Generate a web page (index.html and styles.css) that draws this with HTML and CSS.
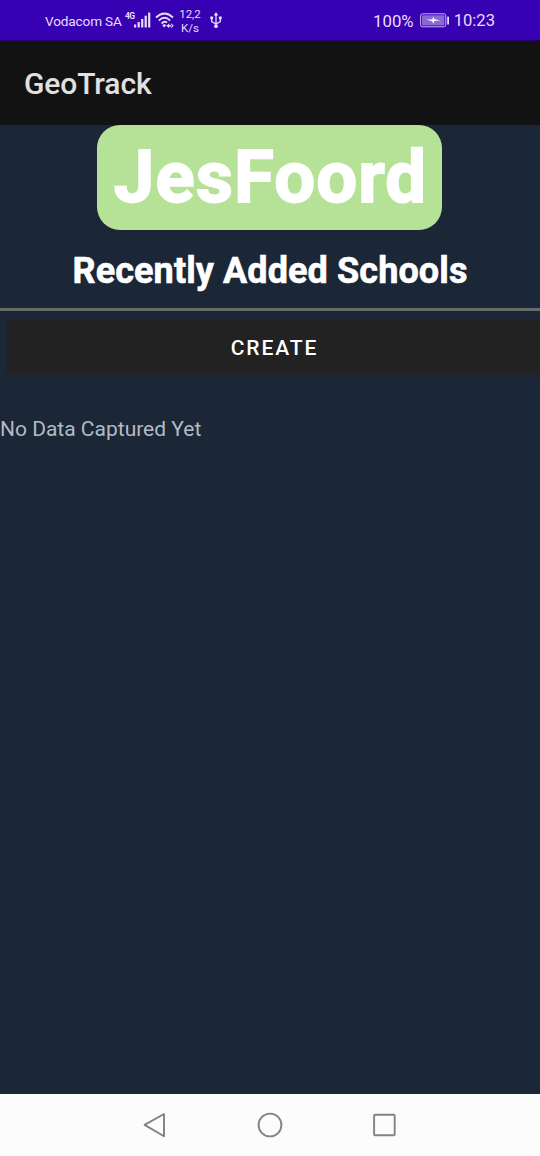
FILE: index.html
```html
<!DOCTYPE html>
<html lang="en">
<head>
<meta charset="utf-8">
<title>GeoTrack</title>
<link rel="stylesheet" href="styles.css">
</head>
<body>
<div class="screen">
  <div class="status">
    <span class="carrier">Vodacom SA</span>
    <span class="network">4G</span>
    <svg class="signal" width="17" height="16" viewBox="0 0 17 16" fill="#e9dcfb"><rect x="0" y="12.5" width="2.2" height="3"/><rect x="3.6" y="10" width="2.2" height="5.5"/><rect x="7.1" y="7" width="2.2" height="8.5"/><rect x="10.6" y="3.7" width="2.2" height="11.8"/><rect x="14.1" y="0.5" width="2.2" height="15"/></svg>
    <svg class="wifi" width="20" height="17" viewBox="0 0 20 17" fill="none" stroke="#e9dcfb" stroke-width="1.8"><path d="M1 5.5Q9.5-2.5 18 5.5M3.8 8.6Q9.5 3 15.2 8.6M6.6 11.5Q9.5 8.5 12 10.5"/><path d="M7.2 13.2Q9.3 11.2 11.2 13.2L9.3 15.6Z" fill="#e9dcfb" stroke="none"/><path d="M11.4 13.8l2.8-2.5v5zM18.8 13.8l-2.8-2.5v5zM13 13.1h4v1.4h-4z" fill="#e9dcfb" stroke="none"/></svg>
    <span class="speed"><span>12,2</span><span>K/s</span></span>
    <svg class="usb" width="12" height="17" viewBox="0 0 12 17" fill="none" stroke="#e9dcfb" stroke-width="1.3"><path d="M6 2v12M1.7 6v3.6L6 12l4.3-2.4V6"/><path d="M6 0l2.3 3.6H3.7zM.3 4.5h2.8v2.8H.3zM8.9 4.5h2.8v2.8H8.9z" fill="#e9dcfb" stroke="none"/><circle cx="6" cy="14.2" r="1.9" fill="#e9dcfb" stroke="none"/></svg>
    <span class="percent">100%</span>
    <svg class="battery" width="30" height="15" viewBox="0 0 30 15"><rect x=".6" y=".8" width="25.2" height="13" rx="2" fill="none" stroke="#cbb5f2" stroke-width="1"/><rect x="2" y="2.2" width="22.4" height="10.2" rx=".7" fill="#8a68d4"/><path d="M6.5 6.5l6-.1.4-2.6 1.8 2.4 5.6 1-6 .9-.5 2.5-1.9-2.4z" fill="#fff"/><rect x="27.2" y="3.5" width="1.8" height="8" rx=".6" fill="#e9dcfb"/></svg>
    <span class="clock">10:23</span>
  </div>
  <header class="appbar">GeoTrack</header>
  <main class="content">
    <div class="brand">JesFoord</div>
    <h1 class="heading">Recently Added Schools</h1>
    <div class="divider"></div>
    <button class="create">CREATE</button>
    <p class="empty">No Data Captured Yet</p>
  </main>
  <nav class="navbar">
    <svg width="26" height="28" viewBox="0 0 26 28" fill="none" stroke="#828282" stroke-width="1.9" stroke-linejoin="round"><path d="M2.6 13.9L22 3v22.3z"/></svg>
    <svg width="28" height="28" viewBox="0 0 28 28" fill="none" stroke="#828282" stroke-width="1.9"><circle cx="14" cy="14" r="11.4"/></svg>
    <svg width="26" height="28" viewBox="0 0 26 28" fill="none" stroke="#828282" stroke-width="1.9"><rect x="2.1" y="3.7" width="20.6" height="20.6" rx="1"/></svg>
  </nav>
</div>
</body>
</html>
```
FILE: styles.css
```css
* { box-sizing: border-box; }
body { margin: 0; font-family: Roboto, "Liberation Sans", sans-serif; }
.screen { display: flex; flex-direction: column; width: 540px; height: 1156px; background: #1b2636; overflow: hidden; }
.status { display: flex; align-items: flex-start; height: 41px; padding: 0 45px; background: #3700b3; border-bottom: 1px solid #240070; color: #e9dcfb; white-space: nowrap; }
.carrier { width: 80px; font-size: 13.6px; line-height: 42px; letter-spacing: -0.15px; }
.network { width: 9px; margin-top: 11px; font-size: 8.5px; line-height: 10px; font-weight: 700; letter-spacing: -0.6px; }
.signal { margin-top: 12px; }
.wifi { margin: 12px 0 0 4px; }
.speed { display: flex; flex-direction: column; align-items: center; width: 24px; margin: 8px 0 0 3px; font-size: 11.5px; line-height: 13.5px; }
.usb { margin: 12px 0 0 8px; }
.percent { margin-left: auto; font-size: 16.8px; line-height: 42px; }
.battery { margin: 13px 0 0 6px; }
.clock { margin-left: 4px; font-size: 16.6px; line-height: 42px; }
.appbar { height: 84px; padding-left: 24px; background: #121212; color: #e1e1e1; font-size: 30px; font-weight: 500; line-height: 85px; letter-spacing: -0.1px; }
.content { display: flex; flex: 1; flex-direction: column; }
.brand { align-self: center; width: 345px; height: 105px; margin-right: 1px; padding-left: 2px; border-radius: 23px; background: #b5e297; color: #fff; font-size: 72.5px; font-weight: 700; line-height: 106px; letter-spacing: 1.1px; text-align: center; white-space: nowrap; -webkit-text-stroke: 1.8px #fff; }
.heading { margin: 0; height: 78px; color: #fff; font-size: 36px; font-weight: 700; line-height: 82px; letter-spacing: 0.1px; text-align: center; white-space: nowrap; -webkit-text-stroke: 0.6px #fff; }
.divider { height: 3px; background: #666b6c; }
.create { height: 54px; margin: 9px 0 0 7px; padding: 2px 0 0 2px; border: 0; border-radius: 2px; background: #222; box-shadow: 0 1px 2px #20272e; color: #fff; font: 500 21px/52px Roboto, sans-serif; letter-spacing: 1.9px; }
.empty { margin: 39px 0 0; color: #b4bac3; font-size: 21px; line-height: 32px; white-space: nowrap; }
.navbar { display: flex; justify-content: space-between; align-items: center; height: 62px; padding: 0 142px; background: #fcfcfc; }
```
